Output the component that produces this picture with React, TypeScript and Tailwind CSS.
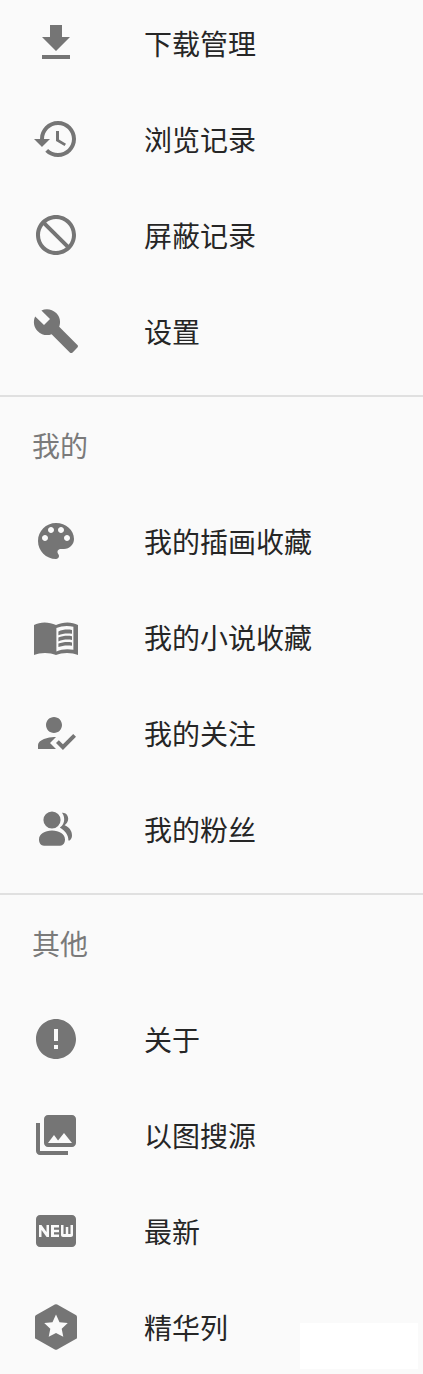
import React from "react";

const cjk = "font-['Noto_Sans_CJK_SC','Noto_Sans',sans-serif]";

const paths = {
    download: "M19 9h-4V3H9v6H5l7 7 7-7zM5 18v2h14v-2H5z",
    history:
        "M13 3c-4.97 0-9 4.03-9 9H1l3.89 3.89.07.14L9 12H6c0-3.87 3.13-7 7-7s7 3.13 7 7-3.13 7-7 7c-1.93 0-3.68-.79-4.94-2.06l-1.42 1.42C8.27 19.99 10.51 21 13 21c4.97 0 9-4.03 9-9s-4.03-9-9-9zm-1 5v5l4.28 2.54.72-1.21-3.5-2.08V8H12z",
    block:
        "M12 2C6.48 2 2 6.48 2 12s4.48 10 10 10 10-4.48 10-10S17.52 2 12 2zM20 12c0-4.42-3.58-8-8-8-1.85 0-3.55.63-4.9 1.69L18.31 16.9C19.37 15.55 20 13.85 20 12zm-8 8c1.85 0 3.55-.63 4.9-1.69L5.69 7.1C4.63 8.45 4 10.15 4 12c0 4.42 3.58 8 8 8z",
    build:
        "M22.7 19l-9.1-9.1c.9-2.3.4-5-1.5-6.9-2-2-5-2.4-7.4-1.3L9 6 6 9 1.6 4.7C.4 7.1.9 10.1 2.9 12.1c1.9 1.9 4.6 2.4 6.9 1.5l9.1 9.1c.4.4 1 .4 1.4 0l2.3-2.3c.5-.4.5-1.1.1-1.4z",
    palette:
        "M12 3c-4.97 0-9 4.03-9 9s4.03 9 9 9c.83 0 1.5-.67 1.5-1.5 0-.39-.15-.74-.39-1.01-.23-.26-.38-.61-.38-.99 0-.83.67-1.5 1.5-1.5H16c2.76 0 5-2.24 5-5 0-4.42-4.03-8-9-8zm-5.5 9c-.83 0-1.5-.67-1.5-1.5S5.67 9 6.5 9 8 9.67 8 10.5 7.33 12 6.5 12zm3-4C8.67 8 8 7.33 8 6.5S8.67 5 9.5 5s1.5.67 1.5 1.5S10.33 8 9.5 8zm5 0c-.83 0-1.5-.67-1.5-1.5S13.67 5 14.5 5s1.5.67 1.5 1.5S15.33 8 14.5 8zm3 4c-.83 0-1.5-.67-1.5-1.5S16.67 9 17.5 9s1.5.67 1.5 1.5-.67 1.5-1.5 1.5z",
    book: "M1 6C4 4.300 8.500 4.300 12 6 15.500 4.300 20 4.300 23 6V21C20 19.600 15 19.600 12 21 9 19.600 4 19.600 1 21zM12.200 7.500V19.200C14.800 18 18 17.800 20.700 18.400V6.900C18 6.200 14.800 6.400 12.200 7.500zM13.200 9.200C15.200 8.300 17.800 8.100 20 8.500V10.400C17.800 10 15.200 10.200 13.200 11.100zM13.200 12.300C15.200 11.400 17.800 11.200 20 11.600V13.500C17.800 13.100 15.200 13.300 13.200 14.200zM13.200 15.300C15.200 14.500 17.800 14.300 20 14.700V16.400C17.800 16 15.200 16.200 13.200 17z",
    howToReg:
        "M9 17l3-2.94c-.39-.04-.68-.06-1-.06-2.67 0-8 1.34-8 4v2h9l-3-3zm2-5c2.21 0 4-1.79 4-4s-1.79-4-4-4-4 1.79-4 4 1.79 4 4 4M15.47 20.5L12 17l1.4-1.41 2.07 2.08 5.13-5.17 1.4 1.41z",
    people:
        "M10 3.200a4.300 4.300 0 1 1 0 8.600 4.300 4.300 0 0 1 0-8.600zM10 12.800c3.600 0 6.500 1.800 6.500 4.500 0 1.800-1 3-2.400 3.100H6c-1.500 0-2.500-1.300-2.500-3.100C3.500 14.600 6.400 12.800 10 12.800zM15 3.900c1.900-.2 3.100 1.300 3.100 3 0 1.400-.8 2.600-1.800 3.200 2.300.9 3.700 2.800 3.700 5 0 1.200-.4 2-1.200 2.600h-.6c.1-2.900-1.800-5-4.300-6.500 1.500-.8 2.200-2.400 2.200-4 0-1.300-.4-2.400-1.100-3.300z",
    error:
        "M12 2C6.48 2 2 6.48 2 12s4.48 10 10 10 10-4.48 10-10S17.52 2 12 2zm1 15h-2v-2h2v2zm0-4h-2V7h2v6z",
    photos:
        "M22 16V4c0-1.100-.9-2-2-2H8c-1.100 0-2 .9-2 2v12c0 1.100.9 2 2 2h12c1.100 0 2-.9 2-2zm-11-4l2.030 2.710L16 11l4 5H8l3-4zM2 6v14c0 1.100.9 2 2 2h14v-2H4V6H2z",
    fiberNew:
        "M20 4H4c-1.110 0-1.990.89-1.990 2L2 18c0 1.110.89 2 2 2h16c1.110 0 2-.89 2-2V6c0-1.110-.89-2-2-2zM8.500 15H7.300l-2.550-3.500V15H3.500V9h1.250l2.500 3.500V9H8.500v6zm5-4.740H11v1.120h2.500v1.260H11v1.110h2.500V15h-4V9h4v1.260zm7 3.740c0 .55-.45 1-1 1h-4c-.55 0-1-.45-1-1V9h1.250v4.510h1.130V9.990h1.250v3.510h1.120V9h1.250v5z",
    hexStar:
        "M11.400.8Q12 .5 12.600.8L21.900 6Q22.500 6.300 22.500 7V17C22.500 17.700 22.500 17.700 21.900 18L12.600 23.200Q12 23.500 11.400 23.200L2.100 18C1.500 17.700 1.500 17.700 1.500 17V7Q1.500 6.300 2.100 6zM12 5.700L10.240 9.570 6.100 10 9.150 12.930 8.360 16.900 12 15 15.640 16.900 14.850 12.930 17.900 10 13.760 9.570z",
};

const MenuIcon = ({ d }: { d: string }) => (
    <svg viewBox="0 0 24 24" className="w-12 h-12 shrink-0 fill-[#757575]">
        <path d={d} fillRule="evenodd" />
    </svg>
);

const MenuRow = ({ icon, label }: { icon: string; label: string }) => (
    <div className="h-24 flex items-center pl-8">
        <MenuIcon d={icon} />
        <span className="ml-16 text-[28px] leading-9 text-[#262626]">{label}</span>
    </div>
);

const SectionTitle = ({ title }: { title: string }) => (
    <div className="h-24 flex items-center pl-8 pb-[1px]">
        <span className="text-[28px] leading-9 text-[#7a7a7a]">{title}</span>
    </div>
);

const Divider = () => <div className="h-[2px] bg-[#e0e0e0] mt-4" />;

const App = () => {
    return (
        <div className={`relative w-[423px] h-[1374px] overflow-hidden bg-[#fafafa] ${cjk}`}>
            <div className="-mt-[5px]">
                <MenuRow icon={paths.download} label="下载管理" />
                <MenuRow icon={paths.history} label="浏览记录" />
                <MenuRow icon={paths.block} label="屏蔽记录" />
                <MenuRow icon={paths.build} label="设置" />
                <Divider />
                <SectionTitle title="我的" />
                <MenuRow icon={paths.palette} label="我的插画收藏" />
                <MenuRow icon={paths.book} label="我的小说收藏" />
                <MenuRow icon={paths.howToReg} label="我的关注" />
                <MenuRow icon={paths.people} label="我的粉丝" />
                <Divider />
                <SectionTitle title="其他" />
                <MenuRow icon={paths.error} label="关于" />
                <MenuRow icon={paths.photos} label="以图搜源" />
                <MenuRow icon={paths.fiberNew} label="最新" />
                <MenuRow icon={paths.hexStar} label="精华列" />
            </div>
            <div className="absolute left-[300px] top-[1323px] w-[118px] h-[46px] bg-white" />
        </div>
    );
};

export default App;
